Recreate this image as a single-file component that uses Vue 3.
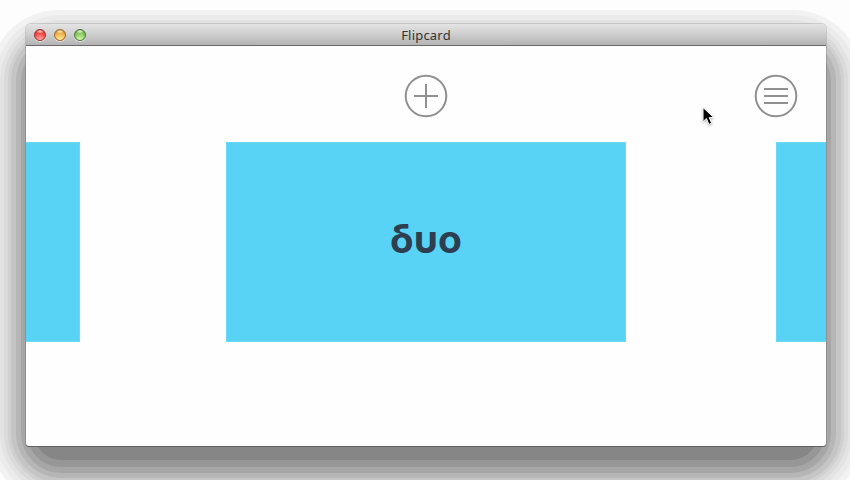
<script setup>
const lights = ['red', 'amber', 'green']
</script>

<template>
  <main class="desktop">
    <div class="shadow"></div>
    <section class="window">
      <header class="titlebar">
        <div class="lights"><span v-for="l in lights" :key="l" :class="['light', l]"></span></div>
        <h1>Flipcard</h1>
      </header>
      <div class="content">
        <nav class="toolbar">
          <button class="tool add" aria-label="Add card">
            <svg width="44" height="44" viewBox="0 0 44 44"><circle cx="22" cy="22" r="20.3" /><path d="M22 10v24M10 22h24" /></svg>
          </button>
          <button class="tool menu" aria-label="Menu">
            <svg width="44" height="44" viewBox="0 0 44 44"><circle cx="22" cy="22" r="20.3" /><path d="M10 15h24M10 22h24M10 29h24" /></svg>
          </button>
        </nav>
        <div class="cards">
          <div class="card side"></div>
          <div class="card main">δυο</div>
          <div class="card side"></div>
        </div>
      </div>
    </section>
    <svg class="cursor" width="16" height="21" viewBox="0 0 16 21">
      <path d="M2 1.5v14.2l3.4-3.2 2.5 5.9 2.8-1.2-2.5-5.6h4.7z" />
    </svg>
  </main>
</template>

<style>
body { margin: 0; overflow: hidden; }
</style>
<style scoped>
.desktop { position: relative; box-sizing: border-box; width: 850px; height: 480px; padding: 24px 24px 34px 26px; background: #fdfdfd; overflow: hidden; }
.shadow {
  position: absolute; left: 34px; top: 54px; width: 784px; height: 406px; border-radius: 27px; background: #868686;
  box-shadow: 0 0 0 7px #979797, 0 0 0 13px #a6a6a6, 0 0 0 18px #b6b6b6,
    0 0 0 23px #c5c5c5, 0 0 0 26px #d0d0d0, 0 0 0 30px #dadada, 0 0 0 34px #e3e3e3,
    0 0 0 39px #ebebeb, 0 0 0 44px #f2f2f2;
}
.window { position: relative; width: 800px; height: 422px; border-radius: 5px 5px 3px 3px; background: #fefefe; box-shadow: 0 0 0 1px rgba(0,0,0,.13), 0 1px 0 #707070; }
.titlebar { position: relative; box-sizing: border-box; height: 22px; display: flex; align-items: center; justify-content: center; border-radius: 5px 5px 0 0; border-bottom: 1px solid #686868; background: linear-gradient(#e4e4e4, #d0d0d0 45%, #b4b4b4); }
.lights { position: absolute; left: 8px; top: 5px; display: flex; gap: 8px; }
.light { box-sizing: border-box; width: 12px; height: 12px; border-radius: 50%; border: 1px solid; box-shadow: 0 1px 0 #e4e4e4; }
.red { border-color: #9a3030; background: radial-gradient(ellipse 4px 2px at 50% 15%, #ffd5d2, transparent), radial-gradient(circle at 50% 100%, #ffb1aa, #f0433f 65%, #b82727); }
.amber { border-color: #9c6420; background: radial-gradient(ellipse 4px 2px at 50% 15%, #fff0cf, transparent), radial-gradient(circle at 50% 100%, #fff2a0, #eeac45 65%, #b97622); }
.green { border-color: #4d7834; background: radial-gradient(ellipse 4px 2px at 50% 15%, #eaffdc, transparent), radial-gradient(circle at 50% 100%, #d9ffae, #83c35c 65%, #558d37); }
h1 { margin: 0; color: #333; font: 400 13px/20px "Noto Sans", "Open Sans", sans-serif; letter-spacing: .2px; }
.content { height: 400px; overflow: hidden; border-radius: 0 0 3px 3px; }
.toolbar { display: grid; grid-template-columns: 1fr 44px 1fr; padding: 28px 28px 24px; height: 44px; }
.tool { padding: 0; border: 0; background: none; width: 44px; height: 44px; }
.tool svg { display: block; fill: none; stroke: #909090; stroke-width: 2; }
.add { grid-column: 2; }
.menu { justify-self: end; }
.cards { display: flex; gap: 146px; margin-left: -346px; width: 1500px; }
.card { flex: 0 0 400px; height: 200px; background: #58d3f5; box-shadow: inset 0 0 0 1px #6bd9f7; }
.card:last-child { margin-left: 4px; }
.main { display: flex; align-items: center; justify-content: center; box-sizing: border-box; padding-bottom: 7px; color: #2c3e50; font: 700 39px/50px "Inter", sans-serif; }
.cursor { position: absolute; left: 701px; top: 106px; fill: #000; stroke: #fff; stroke-width: 1; filter: drop-shadow(0 1px 1px rgba(0,0,0,.3)); }
</style>
